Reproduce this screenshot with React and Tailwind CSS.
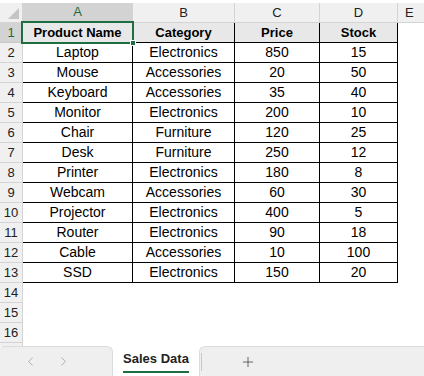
import { ChevronLeft, ChevronRight, Plus } from 'lucide-react';

const cols = [
  { key: 'A', w: 'w-[110px]' },
  { key: 'B', w: 'w-[102px]' },
  { key: 'C', w: 'w-[85px]' },
  { key: 'D', w: 'w-[78px]' },
];

const rows = [
  ['Laptop', 'Electronics', 850, 15],
  ['Mouse', 'Accessories', 20, 50],
  ['Keyboard', 'Accessories', 35, 40],
  ['Monitor', 'Electronics', 200, 10],
  ['Chair', 'Furniture', 120, 25],
  ['Desk', 'Furniture', 250, 12],
  ['Printer', 'Electronics', 180, 8],
  ['Webcam', 'Accessories', 60, 30],
  ['Projector', 'Electronics', 400, 5],
  ['Router', 'Electronics', 90, 18],
  ['Cable', 'Accessories', 10, 100],
  ['SSD', 'Electronics', 150, 20],
];

const head = ['Product Name', 'Category', 'Price', 'Stock'];

function RowHeader({ n }) {
  const sel = n === 1;
  return (
    <div
      className={`w-[23px] h-full shrink-0 flex items-center justify-center border-r border-b text-[13px] ${
        sel ? 'bg-[#d3d3d3] text-[#1e6b3c] border-r-[#d0d0d0] border-b-[#c8c8c8]' : 'bg-[#f0f0f0] text-[#222] border-[#d4d4d4]'
      }`}
    >
      {n < 17 ? n : ''}
    </div>
  );
}

export default function App() {
  const gridRows = [];
  for (let n = 1; n <= 17; n++) {
    let cells;
    if (n === 1) cells = head;
    else if (n <= 13) cells = rows[n - 2];
    else cells = null;
    gridRows.push(
      <div key={n} className="flex h-[20px]">
        <RowHeader n={n} />
        {cols.map((c, i) => (
          <div
            key={c.key}
            className={`${c.w} shrink-0 flex items-center justify-center ${
              cells ? 'border-r border-b border-black' : ''
            } ${n === 1 ? 'bg-[#e8e8e8] font-bold text-[13px]' : 'text-[14px]'} text-black`}
          >
            {cells ? cells[i] : ''}
          </div>
        ))}
        <div className="flex-1" />
      </div>
    );
  }

  return (
    <div className="w-[424px] h-[376px] bg-white flex flex-col overflow-hidden" style={{ fontFamily: '"Liberation Sans", Arial, sans-serif' }}>
      <div className="relative h-[346px] pt-[3px] overflow-hidden">
        <div className="flex h-[20px] bg-[#f0f0f0] text-[13px] text-[#222]">
          <div className="w-[23px] shrink-0 border-r border-b border-[#d4d4d4] relative">
            <div className="absolute right-[3px] bottom-[3px] w-0 h-0 border-l-[11px] border-l-transparent border-b-[11px] border-b-[#c4c4c4]" />
          </div>
          {cols.map((c) => (
            <div
              key={c.key}
              className={`${c.w} shrink-0 flex items-center justify-center border-r border-[#d4d4d4] ${
                c.key === 'A' ? 'bg-[#d3d3d3] text-[#1e6b3c] border-b-2 border-b-[#1e6e42]' : 'border-b'
              }`}
            >
              {c.key}
            </div>
          ))}
          <div className="flex-1 flex items-center pl-[7px] border-b border-[#d4d4d4]">E</div>
        </div>
        {gridRows}
        <div className="absolute left-[21px] top-[21px] w-[113px] h-[23px] border-2 border-[#1e6e42]" />
        <div className="absolute left-[130px] top-[40px] w-[6px] h-[6px] bg-[#1e6e42] border border-white" />
      </div>
      <div className="flex h-[30px] bg-white">
        <div className="w-[113px] bg-[#efefef] border-t border-r border-[#dcdcdc] rounded-tl-[4px] rounded-tr-[6px] flex items-center gap-[18px] pl-[23px] text-[#9f9f9f]">
          <ChevronLeft size={15} strokeWidth={1.3} />
          <ChevronRight size={15} strokeWidth={1.3} />
        </div>
        <div className="w-[86px] flex flex-col items-center justify-center pt-[2px]">
          <span className="font-bold text-[13px] text-[#222] leading-[16px]">Sales Data</span>
          <div className="w-[66px] h-[2px] bg-[#1e6e42] mt-[4px]" />
        </div>
        <div className="flex-1 bg-[#efefef] border-t border-l border-[#dcdcdc] rounded-tl-[6px] flex items-center">
          <div className="w-px h-[18px] bg-[#c8c8c8] ml-[1px]" />
          <div className="ml-[38px] text-[#444]">
            <Plus size={16} strokeWidth={1.2} />
          </div>
        </div>
      </div>
    </div>
  );
}
